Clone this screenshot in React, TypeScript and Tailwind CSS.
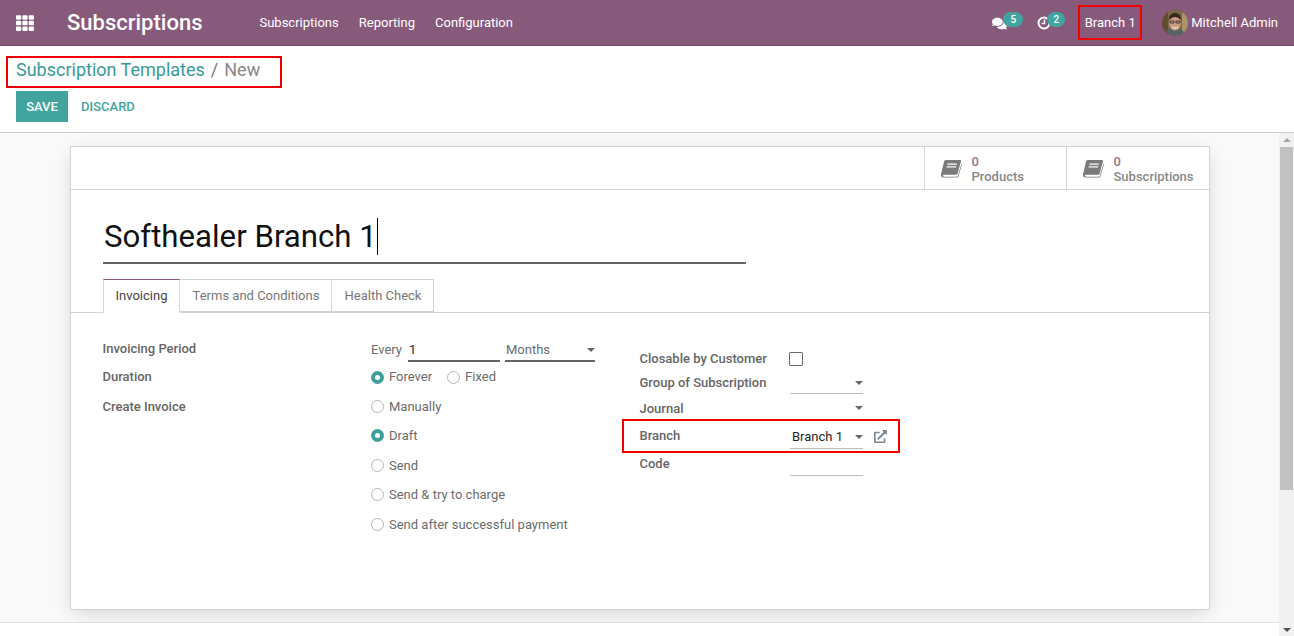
import { FaTh, FaComments, FaExternalLinkAlt } from "react-icons/fa";

function BookIcon() {
	return (
		<svg viewBox="1 1.500 21 20" preserveAspectRatio="none" className="w-[21px] h-[18px] text-[#7a7a7a] shrink-0" fill="currentColor">
			<path d="M6 1.500h14c.8 0 1.200.7 1 1.500l-3.400 13.500c-.3 1.100-.9 1.500-2 1.500H4.200c-1 0-1.400.7-1.200 1.200.2.6.7.8 1.400.8h12.400c.6 0 .9-.3 1.100-.9L21.500 5.500l.5.500-3.500 13.600c-.3 1-1 1.400-2 1.400H3.800C2 21 .7 19.600 1 17.500L4 3.500C4.200 2.400 5 1.500 6 1.500z" />
			<path d="M7.500 5.500h9.500l-.3 1.200H7.200zM6.800 8.500h9.500l-.3 1.200H6.500z" fill="#fff" />
		</svg>
	);
}

function ActivityIcon() {
	return (
		<svg viewBox="0 0 14 14" className="w-[14px] h-[14px]" fill="none" stroke="#fff" strokeWidth="2">
			<circle cx="7" cy="7" r="5.500" />
			<path d="M7.500 3.500v4H4.500" strokeWidth="1.500" />
		</svg>
	);
}

function Avatar() {
	return (
		<svg viewBox="0 0 26 26" className="w-[26px] h-[26px] rounded-full">
			<rect width="26" height="26" fill="#7d6647" />
			<rect x="0" y="0" width="6" height="26" fill="#5f4c33" />
			<rect x="20" y="0" width="6" height="26" fill="#a89468" />
			<path d="M3 26c1-6 5-8 10-8s9 2 10 8z" fill="#56646a" />
			<ellipse cx="13" cy="13" rx="6" ry="7.500" fill="#c99a7e" />
			<path d="M7 10c0-5 3-7 6-7s6 2 6 7c-2-2-4-3-6-3s-4 1-6 3z" fill="#33261d" />
			<path d="M8 11h4v2H8zM14 11h4v2h-4z" fill="none" stroke="#2b2b2b" strokeWidth="0.800" />
			<path d="M10 17c2 1.500 4 1.500 6 0" stroke="#fff" strokeWidth="1" fill="none" />
		</svg>
	);
}

function Radio({ checked = false }: { checked?: boolean }) {
	if (checked) {
		return (
			<span className="w-[13px] h-[13px] rounded-full bg-[#3f9f9a] flex items-center justify-center shrink-0">
				<span className="w-[5px] h-[5px] rounded-full bg-white" />
			</span>
		);
	}
	return <span className="block w-[13px] h-[13px] rounded-full border border-[#adb5bd] bg-white shrink-0" />;
}

function Caret({ color = "#666" }: { color?: string }) {
	return (
		<svg viewBox="0 0 8 4" className="w-[8px] h-[4px]" fill={color}>
			<path d="M0 0h8L4 4z" />
		</svg>
	);
}

function RadioRow({ label, checked }: { label: string; checked?: boolean }) {
	return (
		<div className="h-[29.500px] flex items-center gap-[5px]">
			<Radio checked={checked} />
			<span>{label}</span>
		</div>
	);
}

function StatButton({ label, last }: { label: string; last?: boolean }) {
	return (
		<div className={`${last ? "w-[143px]" : "w-[142px]"} border-l border-[#ced4da] flex items-center pl-[16px] pt-[2px] gap-[9.500px]`}>
			<BookIcon />
			<div className="leading-[15px] font-medium text-[#888]">
				<div className="text-[#9b6f92]">0</div>
				<div>{label}</div>
			</div>
		</div>
	);
}

export default function App() {
	return (
		<div className="w-[1294px] h-[636px] overflow-hidden flex flex-col bg-white text-[13px] text-[#666] font-['Roboto',sans-serif]">
			<nav className="h-[46px] shrink-0 bg-[#875a7b] border-b border-[#6f4b65] flex items-center text-white">
				<FaTh className="ml-[16px] w-[18px] h-[18px]" />
				<span className="ml-[33px] text-[22px] font-medium">Subscriptions</span>
				<div className="ml-[57px] flex gap-[20px] text-[13px]">
					<span>Subscriptions</span>
					<span>Reporting</span>
					<span>Configuration</span>
				</div>
				<div className="ml-auto flex items-center">
					<div className="relative w-[14px] h-[14px]">
						<FaComments className="w-[15px] h-[15px]" />
						<span className="absolute left-[11px] -top-[4px] w-[20px] h-[15px] rounded-full bg-[#41a49e] text-[10px] font-medium flex items-center justify-center">5</span>
					</div>
					<div className="relative ml-[31px] w-[14px] h-[14px]">
						<ActivityIcon />
						<span className="absolute left-[10px] -top-[4px] w-[18px] h-[15px] rounded-full bg-[#41a49e] text-[10px] font-medium flex items-center justify-center">2</span>
					</div>
					<div className="ml-[27px] w-[64px] h-[35px] border-2 border-[#f00000] flex items-center justify-center">Branch 1</div>
					<div className="ml-[20px] mr-[16px] flex items-center gap-[3px]">
						<Avatar />
						<span>Mitchell Admin</span>
					</div>
				</div>
			</nav>

			<header className="h-[87px] shrink-0 border-b border-[#ccc] pt-[10px] pl-[6px]">
				<div className="w-[276px] h-[32px] border-2 border-[#f00000] pl-[8px] pb-[5px] flex items-center gap-[6px] text-[18px]">
					<span className="text-[#3a9a98]">Subscription Templates</span>
					<span className="text-[#777]">/</span>
					<span className="text-[#888]">New</span>
				</div>
				<div className="mt-[3px] ml-[10px] flex items-center font-medium">
					<button className="w-[52px] h-[31px] bg-[#41a49e] text-white">SAVE</button>
					<button className="ml-[13px] text-[#41a49e]">DISCARD</button>
				</div>
			</header>

			<div className="flex-1 flex min-h-0">
				<div className="flex-1 flex flex-col min-w-0">
					<main className="flex-1 bg-[#f9f9f9] border-b border-[#dee2e6] pt-[13px] pl-[70px]">
						<div className="w-[1140px] h-[464px] bg-white border border-[#ced4da] shadow-[0_5px_20px_-5px_rgba(0,0,0,0.2)]">
							<div className="h-[43px] border-b border-[#ced4da] flex justify-end">
								<StatButton label="Products" />
								<StatButton label="Subscriptions" last />
							</div>

							<div className="ml-[32px] mt-[20px] w-[643px] h-[54px] border-b-2 border-[#666] flex items-start">
								<span className="text-[31.200px] leading-[54px] text-[#111] pl-[1px]">Softhealer Branch 1</span>
								<span className="mt-[8px] w-px h-[37px] bg-black" />
							</div>

							<div className="mt-[15px] h-[34px] border-b border-[#ced4da] pl-[32px] flex">
								<div className="w-[77px] h-[34px] border border-[#ced4da] border-t-[#875a7b] border-b-white bg-white text-[#444] flex items-center justify-center">Invoicing</div>
								<div className="w-[152px] h-[33px] border border-l-0 border-[#ced4da] pl-px flex items-center justify-center text-[#777]">Terms and Conditions</div>
								<div className="w-[102px] h-[33px] border border-l-0 border-[#ced4da] pl-px flex items-center justify-center text-[#777]">Health Check</div>
							</div>

							<div className="flex pl-[31.500px] pt-[22px]">
								<div className="w-[268.500px] font-medium">
									<div className="h-[28px] flex items-center">Invoicing Period</div>
									<div className="h-[28px] flex items-center">Duration</div>
									<div className="h-[30px] mt-px flex items-center">Create Invoice</div>
								</div>

								<div className="w-[224px] text-[#6c6c6c]">
									<div className="h-[28px] flex items-center">
										<span className="pt-[2px]">Every</span>
										<div className="ml-[6px] w-[92px] h-[26px] border-b-2 border-[#666] flex items-center pl-[1px] pt-[4px] text-[#212529]">1</div>
										<div className="ml-[5px] w-[90px] h-[26px] border-b-2 border-[#666] flex items-center justify-between pl-px pt-[4px]">
											<span>Months</span>
											<Caret />
										</div>
									</div>
									<div className="h-[28px] flex items-center">
										<Radio checked />
										<span className="ml-[5px]">Forever</span>
										<span className="ml-[15px]"><Radio /></span>
										<span className="ml-[5px]">Fixed</span>
									</div>
									<div className="mt-[0.600px]">
										<RadioRow label="Manually" />
										<RadioRow label="Draft" checked />
										<RadioRow label="Send" />
										<RadioRow label="Send & try to charge" />
										<RadioRow label="Send after successful payment" />
									</div>
								</div>

								<div className="ml-[44.500px] mt-[11px] w-[270px] font-medium">
									<div className="h-[25px] flex items-center">
										<span className="w-[149.500px]">Closable by Customer</span>
										<span className="w-[14px] h-[14px] border-[1.500px] border-[#6a6a6a] rounded-[1px] bg-white" />
									</div>
									<div className="h-[25px] flex items-start">
										<span className="w-[150.500px] h-[23px] flex items-center">Group of Subscription</span>
										<div className="w-[73px] h-[23px] border-b border-[#bbb] pt-px flex items-center justify-end"><Caret /></div>
									</div>
									<div className="h-[26px] flex items-start">
										<span className="w-[150.500px] h-[25px] flex items-center">Journal</span>
										<div className="w-[73px] h-[25px] border-b border-[#bbb] flex items-center justify-end"><Caret /></div>
									</div>
									<div className="relative h-[28px] flex items-start">
										<span className="w-[150.500px] h-[27px] flex items-center">Branch</span>
										<div className="w-[73px] h-[27px] border-b border-[#bbb] flex items-center justify-between pl-[2px] pt-[4px] font-normal">
											<span className="text-[#212529]">Branch 1</span>
											<Caret />
										</div>
										<FaExternalLinkAlt className="ml-[11px] mt-[8px] w-[13px] h-[13px] text-[#7d8790]" />
										<div className="absolute -left-[17.500px] top-[-3px] w-[278px] h-[34px] border-2 border-[#f00000]" />
									</div>
									<div className="h-[28px] flex items-start">
										<span className="w-[150.500px] h-[27px] flex items-center">Code</span>
										<div className="w-[73px] h-[26px] border-b border-[#bbb]" />
									</div>
								</div>
							</div>
						</div>
					</main>
					<div className="h-[13px] shrink-0 bg-white" />
				</div>

				<div className="w-[15px] shrink-0 bg-[#f1f1f1] flex flex-col items-center">
					<svg viewBox="0 0 8 4" className="w-[8px] h-[4px] mt-[5px]" fill="#a3a3a3"><path d="M4 0l4 4H0z" /></svg>
					<div className="mt-[5px] w-[13px] h-[343px] bg-[#c1c1c1]" />
					<svg viewBox="0 0 8 4" className="w-[8px] h-[4px] mt-auto mb-[4px]" fill="#505050"><path d="M0 0h8L4 4z" /></svg>
				</div>
			</div>
		</div>
	);
}
